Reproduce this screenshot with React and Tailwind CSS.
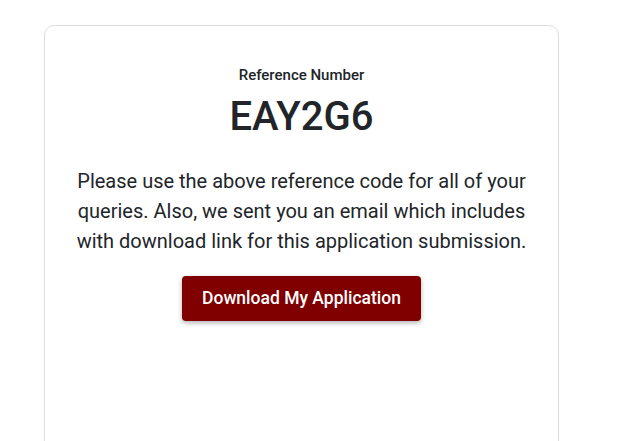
export default function App() {
  return (
    <div className="min-h-screen bg-white px-[44px] pt-[25px]" style={{ fontFamily: 'Roboto, "Liberation Sans", sans-serif' }}>
      <div className="w-[515px] h-[460px] rounded-[10px] border border-[#dddddd] bg-white flex flex-col items-center pt-[39px] px-[20px] text-[#212529]">
        <div className="text-[15px] font-medium leading-[20px]">Reference Number</div>
        <div className="text-[40px] font-medium leading-[48px] mt-[8px]">EAY2G6</div>
        <p className="text-[20px] leading-[30px] text-center mt-[25px]">
          Please use the above reference code for all of your queries. Also, we sent you an email which includes with download link for this application submission.
        </p>
        <button className="mt-[20px] h-[45px] px-[20px] rounded-[4px] bg-[#800000] text-white text-[17.5px] font-medium shadow-[0_2px_5px_rgba(0,0,0,0.3)]">
          Download My Application
        </button>
      </div>
    </div>
  );
}
